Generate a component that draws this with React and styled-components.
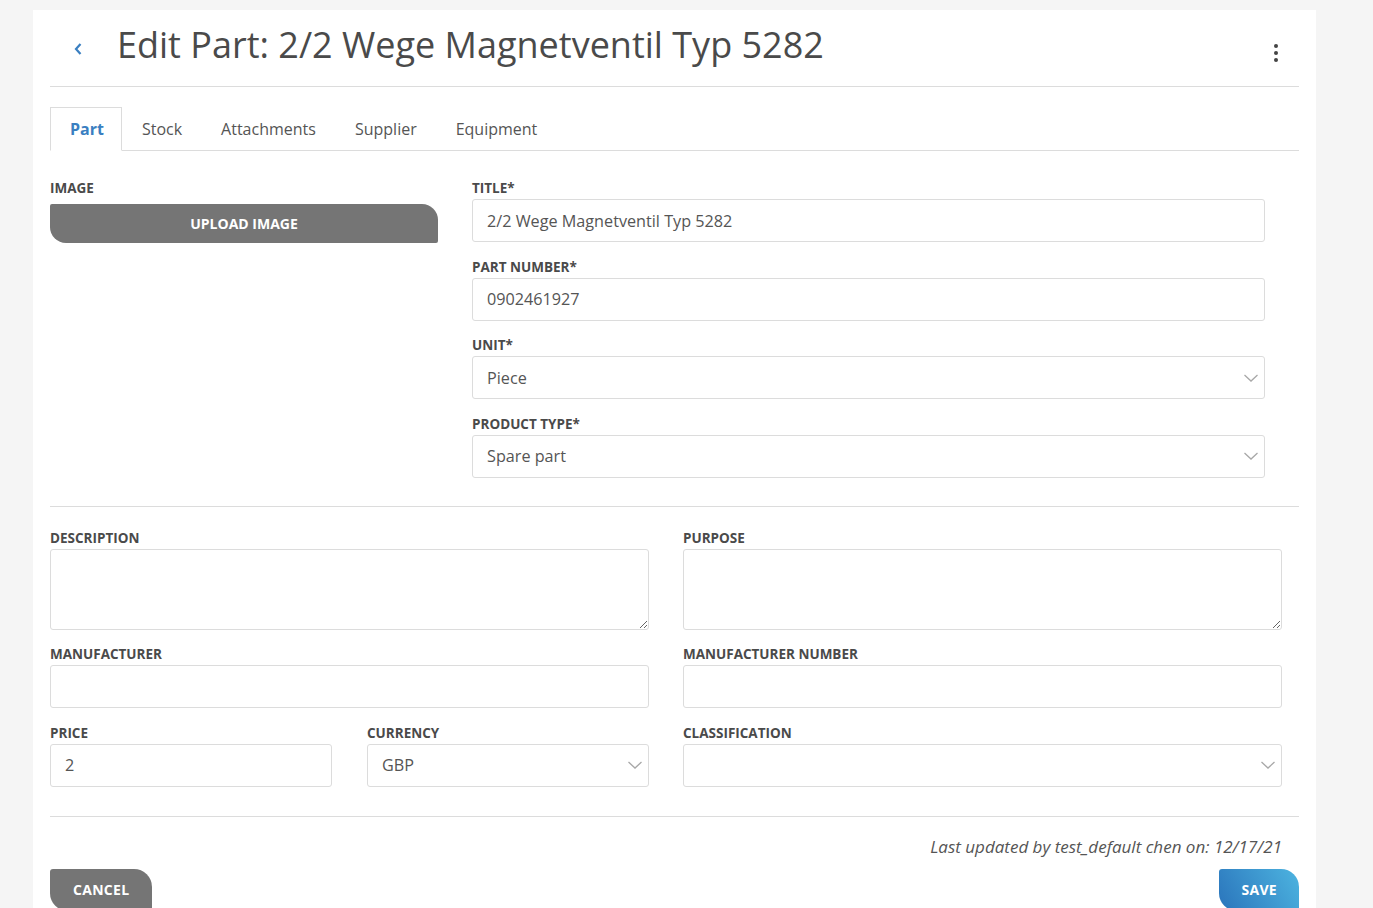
import React from "react";
import styled, {createGlobalStyle} from "styled-components";

const GlobalStyle = createGlobalStyle`
  html, body {
    margin: 0;
    padding: 0;
    background: #f5f5f5;
    overflow: hidden;
  }
  body {
    font-family: "Open Sans", "Liberation Sans", sans-serif;
    color: #4a4a4a;
  }
  * {
    box-sizing: border-box;
  }
`;

const Card = styled.div`
  margin: 10px 0 0 33px;
  width: 1283px;
  min-height: 920px;
  background: #fff;
  padding: 0 17px;
`;

const Header = styled.div`
  display: flex;
  align-items: center;
  height: 77px;
  padding-bottom: 8px;
  border-bottom: 1px solid #dcdcdc;
`;

const BackButton = styled.button`
  display: flex;
  align-items: center;
  justify-content: center;
  width: 28px;
  height: 28px;
  margin: 9px 25px 0 14px;
  padding: 0;
  border: none;
  background: transparent;
  cursor: pointer;
`;

const PageTitle = styled.h1`
  flex: 1;
  margin: 0;
  font-size: 36px;
  font-weight: 400;
  color: #4a4a4a;
  white-space: nowrap;
`;

const Kebab = styled.button`
  display: flex;
  flex-direction: column;
  align-items: center;
  gap: 3px;
  margin: 18px 21px 0 0;
  padding: 0;
  border: none;
  background: transparent;
`;

const Dot = styled.span`
  width: 4px;
  height: 4px;
  border-radius: 50%;
  background: #444;
`;

const TabBar = styled.div`
  display: flex;
  margin-top: 20px;
  height: 44px;
  border-bottom: 1px solid #dcdcdc;
`;

const Tab = styled.div`
  display: flex;
  align-items: center;
  padding: ${p => (p.$active ? "0 17px 0 19px" : "0 19px 0 20px")};
  height: ${p => (p.$active ? 44 : 43)}px;
  font-size: 16px;
  color: ${p => (p.$active ? "#3a7fc1" : "#555")};
  font-weight: ${p => (p.$active ? 700 : 400)};
  border: ${p => (p.$active ? "1px solid #dcdcdc" : "none")};
  border-bottom-color: #fff;
  background: ${p => (p.$active ? "#fff" : "transparent")};
  margin-bottom: ${p => (p.$active ? -1 : 0)}px;
`;

const TopSection = styled.div`
  display: grid;
  grid-template-columns: 388px 793px;
  column-gap: 34px;
  padding: 28px 0 12.5px;
  border-bottom: 1px solid #dcdcdc;
`;

const BottomSection = styled.div`
  display: grid;
  grid-template-columns: 599px 599px;
  column-gap: 34px;
  padding: 22px 0 13.5px;
  border-bottom: 1px solid #dcdcdc;
`;

const SplitRow = styled.div`
  display: grid;
  grid-template-columns: 282px 282px;
  column-gap: 35px;
`;

const Field = styled.div`
  margin-bottom: 15.5px;
`;

const Label = styled.label`
  display: block;
  font-size: 13.5px;
  font-weight: 700;
  line-height: 19px;
  margin-bottom: 1px;
  color: #4a4a4a;
  text-transform: uppercase;
`;

const Input = styled.input`
  display: block;
  width: 100%;
  height: 43px;
  padding: 0 14px;
  border: 1px solid #dcdcdc;
  border-radius: 3px;
  font-family: "Open Sans", "Liberation Sans", sans-serif;
  font-size: 16.2px;
  color: #555;
  background: #fff;
  outline: none;
`;

const TextArea = styled.textarea`
  display: block;
  width: 100%;
  height: 81px;
  margin-bottom: 1px;
  padding: 10px 14px;
  border: 1px solid #dcdcdc;
  border-radius: 3px;
  font-family: "Open Sans", "Liberation Sans", sans-serif;
  font-size: 16px;
  color: #555;
  outline: none;
`;

const SelectBox = styled.div`
  display: flex;
  align-items: center;
  justify-content: space-between;
  height: 43px;
  padding: 0 5px 0 14px;
  border: 1px solid #dcdcdc;
  border-radius: 3px;
  font-size: 16.2px;
  color: #555;
`;

const UploadButton = styled.button`
  display: block;
  width: 100%;
  height: 39px;
  margin-top: 6px;
  border: none;
  border-radius: 2px 16px 2px 16px;
  background: #757575;
  color: #fff;
  font-family: "Open Sans", "Liberation Sans", sans-serif;
  font-size: 14px;
  font-weight: 700;
  text-transform: uppercase;
`;

const Footer = styled.div`
  display: flex;
  flex-direction: column;
  padding-top: 18px;
`;

const Updated = styled.div`
  align-self: flex-end;
  margin-right: 17px;
  font-size: 17px;
  font-style: italic;
  line-height: 24px;
  color: #555;
`;

const ButtonRow = styled.div`
  display: flex;
  justify-content: space-between;
  margin-top: 10px;
`;

const ActionButton = styled.button`
  height: 42px;
  padding: 0 ${p => p.$pad}px;
  border: none;
  border-radius: 3px 18px 3px 18px;
  background: ${p => (p.$primary ? "linear-gradient(60deg, #2a74bb 0%, #4db4e0 100%)" : "#757575")};
  color: #fff;
  font-family: "Open Sans", "Liberation Sans", sans-serif;
  font-size: 14px;
  font-weight: 700;
  letter-spacing: 0.3px;
  text-transform: uppercase;
`;

const Chevron = () => (
  <svg width="16" height="10" viewBox="0 0 16 10">
    <polyline points="1.5,2 8,8 14.5,2" fill="none" stroke="#a8a8a8" strokeWidth="1.3"/>
  </svg>
);

const Select = ({value}) => (
  <SelectBox>
    <span>{value}</span>
    <Chevron/>
  </SelectBox>
);

const App = () => {
  return (
    <>
      <GlobalStyle/>
      <Card>
        <Header>
          <BackButton>
            <svg width="10" height="14" viewBox="0 0 10 14">
              <polyline points="7.5,2 3,7 7.5,12" fill="none" stroke="#3a7fc1" strokeWidth="2.2"/>
            </svg>
          </BackButton>
          <PageTitle>Edit Part: 2/2 Wege Magnetventil Typ 5282</PageTitle>
          <Kebab>
            <Dot/><Dot/><Dot/>
          </Kebab>
        </Header>

        <TabBar>
          <Tab $active>Part</Tab>
          <Tab>Stock</Tab>
          <Tab>Attachments</Tab>
          <Tab>Supplier</Tab>
          <Tab>Equipment</Tab>
        </TabBar>

        <TopSection>
          <div>
            <Label>Image</Label>
            <UploadButton>Upload Image</UploadButton>
          </div>
          <div>
            <Field>
              <Label>Title*</Label>
              <Input defaultValue="2/2 Wege Magnetventil Typ 5282"/>
            </Field>
            <Field>
              <Label>Part Number*</Label>
              <Input defaultValue="0902461927"/>
            </Field>
            <Field>
              <Label>Unit*</Label>
              <Select value="Piece"/>
            </Field>
            <Field>
              <Label>Product Type*</Label>
              <Select value="Spare part"/>
            </Field>
          </div>
        </TopSection>

        <BottomSection>
          <div>
            <Field>
              <Label>Description</Label>
              <TextArea/>
            </Field>
            <Field>
              <Label>Manufacturer</Label>
              <Input/>
            </Field>
            <SplitRow>
              <Field>
                <Label>Price</Label>
                <Input defaultValue="2"/>
              </Field>
              <Field>
                <Label>Currency</Label>
                <Select value="GBP"/>
              </Field>
            </SplitRow>
          </div>
          <div>
            <Field>
              <Label>Purpose</Label>
              <TextArea/>
            </Field>
            <Field>
              <Label>Manufacturer Number</Label>
              <Input/>
            </Field>
            <Field>
              <Label>Classification</Label>
              <Select value=""/>
            </Field>
          </div>
        </BottomSection>

        <Footer>
          <Updated>Last updated by test_default chen on: 12/17/21</Updated>
          <ButtonRow>
            <ActionButton $pad={23}>Cancel</ActionButton>
            <ActionButton $pad={22} $primary>Save</ActionButton>
          </ButtonRow>
        </Footer>
      </Card>
    </>
  );
};

export default App;
